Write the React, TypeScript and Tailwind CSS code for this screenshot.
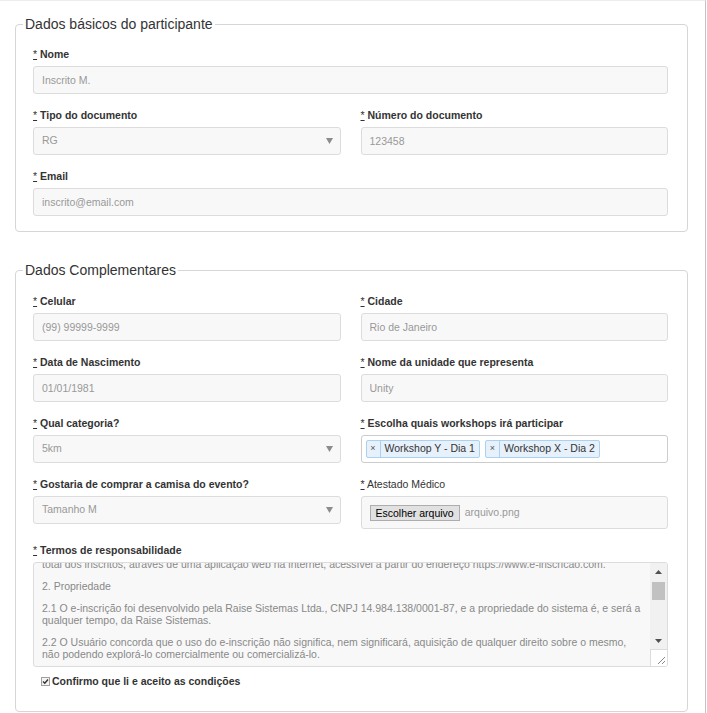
import type { ReactNode } from "react"

function Label({ children, bold = true }: { children: ReactNode; bold?: boolean }) {
  return (
    <label
      className={
        bold
          ? "mb-[3px] block text-[10.5px] font-bold leading-[18px] text-[#333]"
          : "mb-[3px] block text-[10.5px] leading-[18px] text-[#333]"
      }
    >
      <span className="font-normal underline">*</span> {children}
    </label>
  )
}

function TextInput({ value }: { value: string }) {
  return (
    <input
      readOnly
      value={value}
      className="block h-[28px] w-full rounded-[3px] border border-[#dcdcdc] bg-[#f8f8f8] px-[8px] text-[10.5px] text-[#999] outline-none"
    />
  )
}

function Select({ value }: { value: string }) {
  return (
    <div className="flex h-[28px] w-full items-center justify-between rounded-[3px] border border-[#dcdcdc] bg-[#f8f8f8] pl-[8px] pr-[7px] text-[10.5px] text-[#999]">
      <span>{value}</span>
      <svg width="7" height="6" viewBox="0 0 7 6">
        <path d="M0 0h7L3.5 6z" fill="#8c8c8c" />
      </svg>
    </div>
  )
}

function Chip({ label }: { label: string }) {
  return (
    <span className="flex h-[18px] items-center rounded-[2px] border border-[#aad1f2] bg-[#e6f1fc] text-[10.5px] text-[#333]">
      <span className="flex h-full w-[14px] items-center justify-center border-r border-[#aad1f2] text-[9px] text-[#555]">
        ×
      </span>
      <span className="px-[4px]">{label}</span>
    </span>
  )
}

function Fieldset({ title, children, first }: { title: string; children: ReactNode; first?: boolean }) {
  return (
    <fieldset className="rounded-[4px] border border-[#d6d6d6] px-[7px]">
      <legend className="px-[2px] text-[14px] leading-[20px] text-[#333]">{title}</legend>
      <div
        className={
          first
            ? "flex flex-col gap-[12px] pb-[15px] pl-[10px] pr-[12px] pt-[11px]"
            : "flex flex-col gap-[12px] pb-[21px] pl-[10px] pr-[12px] pt-[12px]"
        }
      >
        {children}
      </div>
    </fieldset>
  )
}

const terms: string[][] = [
  ["total dos inscritos, através de uma aplicação web na internet, acessível a partir do endereço https://www.e-inscricao.com."],
  ["2. Propriedade"],
  [
    "2.1 O e-inscrição foi desenvolvido pela Raise Sistemas Ltda., CNPJ 14.984.138/0001-87, e a propriedade do sistema é, e será a",
    "qualquer tempo, da Raise Sistemas.",
  ],
  [
    "2.2 O Usuário concorda que o uso do e-inscrição não significa, nem significará, aquisição de qualquer direito sobre o mesmo,",
    "não podendo explorá-lo comercialmente ou comercializá-lo.",
  ],
  ["2.3 O Usuário não poderá copiar, modificar ou distribuir o sistema."],
]

function Terms() {
  return (
    <div className="flex h-[105px] overflow-hidden rounded-[3px] border border-[#dcdcdc] bg-[#f8f8f8]">
      <div className="flex-1 overflow-hidden pl-[8px] text-[10.5px] leading-[12px] text-[#888]">
        <div className="-mt-[5px]">
          {terms.map((para, i) => (
            <p key={i} className="mb-[10px]">
              {para.map((line, j) => (
                <span key={j} className="block whitespace-nowrap">
                  {line}
                </span>
              ))}
            </p>
          ))}
        </div>
      </div>
      {/* scrollbar */}
      <div className="flex w-[17px] flex-col bg-[#f1f1f1]">
        <div className="flex h-[17px] items-center justify-center">
          <svg width="7" height="4" viewBox="0 0 7 4">
            <path d="M3.5 0L7 4H0z" fill="#505050" />
          </svg>
        </div>
        <div className="flex-1 px-[2px] pt-[2px]">
          <div className="h-[18px] bg-[#c1c1c1]" />
        </div>
        <div className="flex h-[17px] items-center justify-center">
          <svg width="7" height="4" viewBox="0 0 7 4">
            <path d="M0 0h7L3.5 4z" fill="#505050" />
          </svg>
        </div>
        <div className="flex h-[17px] items-end justify-end border-l border-t border-[#dcdcdc] bg-white p-[2px]">
          <svg width="8" height="8" viewBox="0 0 8 8">
            <path d="M8 1L1 8M8 5L5 8" stroke="#888" strokeWidth="1" />
          </svg>
        </div>
      </div>
    </div>
  )
}

export default function App() {
  return (
    <div className="min-h-[713px] w-[706px] border-r border-t border-r-[#c4c4c4] border-t-[#ececec] bg-white pl-[15px] pr-[17px] pt-[13px] font-['Liberation_Sans',Arial,sans-serif]">
      <Fieldset title="Dados básicos do participante" first>
        <div>
          <Label>Nome</Label>
          <TextInput value="Inscrito M." />
        </div>
        <div className="grid grid-cols-2 gap-x-[20px]">
          <div>
            <Label>Tipo do documento</Label>
            <Select value="RG" />
          </div>
          <div>
            <Label>Número do documento</Label>
            <TextInput value="123458" />
          </div>
        </div>
        <div>
          <Label>Email</Label>
          <TextInput value="inscrito@email.com" />
        </div>
      </Fieldset>

      <div className="mt-[28px]">
        <Fieldset title="Dados Complementares">
          <div className="grid grid-cols-2 gap-x-[20px]">
            <div>
              <Label>Celular</Label>
              <TextInput value="(99) 99999-9999" />
            </div>
            <div>
              <Label>Cidade</Label>
              <TextInput value="Rio de Janeiro" />
            </div>
          </div>
          <div className="grid grid-cols-2 gap-x-[20px]">
            <div>
              <Label>Data de Nascimento</Label>
              <TextInput value="01/01/1981" />
            </div>
            <div>
              <Label>Nome da unidade que representa</Label>
              <TextInput value="Unity" />
            </div>
          </div>
          <div className="grid grid-cols-2 gap-x-[20px]">
            <div>
              <Label>Qual categoria?</Label>
              <Select value="5km" />
            </div>
            <div>
              <Label>Escolha quais workshops irá participar</Label>
              <div className="flex h-[28px] items-center gap-[5px] rounded-[3px] border border-[#cccccc] bg-white px-[4px]">
                <Chip label="Workshop Y - Dia 1" />
                <Chip label="Workshop X - Dia 2" />
              </div>
            </div>
          </div>
          <div className="grid grid-cols-2 items-start gap-x-[20px]">
            <div>
              <Label>Gostaria de comprar a camisa do evento?</Label>
              <Select value="Tamanho M" />
            </div>
            <div>
              <Label bold={false}>Atestado Médico</Label>
              <div className="flex h-[33px] items-center gap-[5px] rounded-[3px] border border-[#dcdcdc] bg-[#f8f8f8] px-[8px]">
                <span className="border border-[#adadad] bg-[#e1e1e1] px-[5px] text-[10.5px] leading-[14px] text-black">
                  Escolher arquivo
                </span>
                <span className="text-[10.5px] text-[#999]">arquivo.png</span>
              </div>
            </div>
          </div>
          <div>
            <Label>Termos de responsabilidade</Label>
            <Terms />
            <div className="mt-[5px] flex items-center gap-[2px] pl-[8px]">
              <span className="flex h-[9px] w-[9px] items-center justify-center border border-[#a0a0a0] bg-[#f4f4f4]">
                <svg width="7" height="7" viewBox="0 0 7 7">
                  <path d="M1 3.5l1.8 1.8L6 1.5" stroke="#333" strokeWidth="1.4" fill="none" />
                </svg>
              </span>
              <span className="text-[10.5px] font-bold leading-[18px] text-[#333]">
                Confirmo que li e aceito as condições
              </span>
            </div>
          </div>
        </Fieldset>
      </div>
    </div>
  )
}
